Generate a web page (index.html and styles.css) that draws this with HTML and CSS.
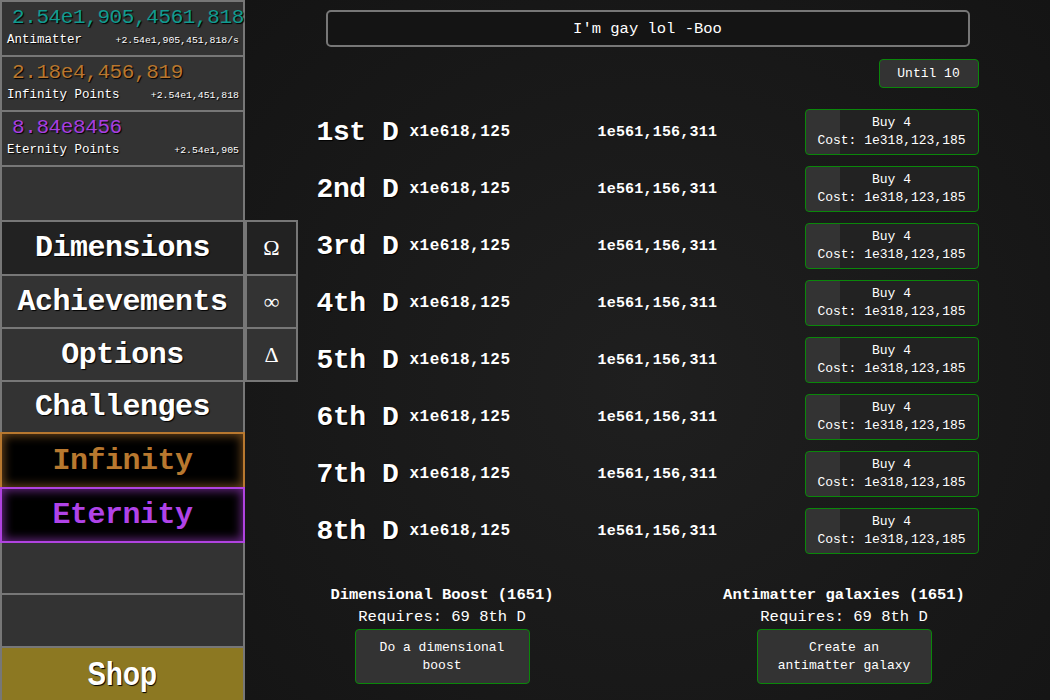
FILE: index.html
```html
<!DOCTYPE html>
<html>
<head>
<meta charset="utf-8">
<link rel="stylesheet" href="styles.css">
</head>
<body>
<div class="app">
  <nav class="sidebar">
    <div class="stat">
      <div class="stat-value am">2.54e1,905,4561,818</div>
      <div class="stat-line"><span class="stat-label">Antimatter</span><span class="stat-rate">+2.54e1,905,451,818/s</span></div>
    </div>
    <div class="stat">
      <div class="stat-value ip">2.18e4,456,819</div>
      <div class="stat-line"><span class="stat-label">Infinity Points</span><span class="stat-rate">+2.54e1,451,818</span></div>
    </div>
    <div class="stat">
      <div class="stat-value ep">8.84e8456</div>
      <div class="stat-line"><span class="stat-label">Eternity Points</span><span class="stat-rate">+2.54e1,905</span></div>
    </div>
    <div class="nav-item empty"></div>
    <div class="nav-item selected">Dimensions</div>
    <div class="nav-item">Achievements</div>
    <div class="nav-item">Options</div>
    <div class="nav-item">Challenges</div>
    <div class="nav-item infinity">Infinity</div>
    <div class="nav-item eternity">Eternity</div>
    <div class="nav-item empty"></div>
    <div class="nav-item empty"></div>
    <div class="nav-item shop"><span class="shop-label">Shop</span></div>
  </nav>
  <div class="subtabs">
    <div class="subtab active">Ω</div>
    <div class="subtab">∞</div>
    <div class="subtab">Δ</div>
  </div>
  <main class="main">
    <div class="content">
      <div class="news">I'm gay lol -Boo</div>
      <div class="until-wrap"><button class="btn until">Until 10</button></div>
      <div class="dims">
        <div class="dim-row"><div class="dim-name">1st D</div><div class="dim-mult">x1e618,125</div><div class="dim-amount">1e561,156,311</div><button class="btn buy">Buy 4<br>Cost: 1e318,123,185</button></div>
        <div class="dim-row"><div class="dim-name">2nd D</div><div class="dim-mult">x1e618,125</div><div class="dim-amount">1e561,156,311</div><button class="btn buy">Buy 4<br>Cost: 1e318,123,185</button></div>
        <div class="dim-row"><div class="dim-name">3rd D</div><div class="dim-mult">x1e618,125</div><div class="dim-amount">1e561,156,311</div><button class="btn buy">Buy 4<br>Cost: 1e318,123,185</button></div>
        <div class="dim-row"><div class="dim-name">4th D</div><div class="dim-mult">x1e618,125</div><div class="dim-amount">1e561,156,311</div><button class="btn buy">Buy 4<br>Cost: 1e318,123,185</button></div>
        <div class="dim-row"><div class="dim-name">5th D</div><div class="dim-mult">x1e618,125</div><div class="dim-amount">1e561,156,311</div><button class="btn buy">Buy 4<br>Cost: 1e318,123,185</button></div>
        <div class="dim-row"><div class="dim-name">6th D</div><div class="dim-mult">x1e618,125</div><div class="dim-amount">1e561,156,311</div><button class="btn buy">Buy 4<br>Cost: 1e318,123,185</button></div>
        <div class="dim-row"><div class="dim-name">7th D</div><div class="dim-mult">x1e618,125</div><div class="dim-amount">1e561,156,311</div><button class="btn buy">Buy 4<br>Cost: 1e318,123,185</button></div>
        <div class="dim-row"><div class="dim-name">8th D</div><div class="dim-mult">x1e618,125</div><div class="dim-amount">1e561,156,311</div><button class="btn buy">Buy 4<br>Cost: 1e318,123,185</button></div>
      </div>
    </div>
    <div class="resets">
      <div class="reset">
        <div class="reset-title">Dimensional Boost (1651)</div>
        <div class="reset-req">Requires: 69 8th D</div>
        <button class="btn reset-btn">Do a dimensional<br>boost</button>
      </div>
      <div class="reset">
        <div class="reset-title">Antimatter galaxies (1651)</div>
        <div class="reset-req">Requires: 69 8th D</div>
        <button class="btn reset-btn">Create an<br>antimatter galaxy</button>
      </div>
    </div>
  </main>
</div>
</body>
</html>
```
FILE: styles.css
```css
* { box-sizing: border-box; }
html, body { margin: 0; padding: 0; }
body {
  width: 1050px;
  height: 700px;
  overflow: hidden;
  background: #161616;
  color: #fff;
  font-family: "Liberation Mono", "DejaVu Sans Mono", monospace;
}
.app {
  position: relative;
  display: flex;
  height: 700px;
}
.sidebar {
  width: 245px;
  flex: none;
  height: 700px;
  background: #777;
  padding: 2px 2px 0 2px;
  display: grid;
  grid-template-columns: minmax(0, 1fr);
  grid-template-rows: 53px 53px 53px 53px 52px 51px 51px 50px 53px 52px 50px 51px 1fr;
  row-gap: 2px;
}
.stat {
  background: #333;
  padding: 4px 4px 0 5px;
  text-shadow: 1px 1px 1px #000;
  min-width: 0;
}
.stat-value {
  font-size: 21px;
  line-height: 24px;
  letter-spacing: -0.4px;
  padding-left: 5px;
  white-space: nowrap;
}
.am { color: #119b90; }
.ip { color: #b9772f; }
.ep { color: #a83fe0; }
.stat-line {
  display: flex;
  justify-content: space-between;
  align-items: baseline;
  margin-top: 3px;
}
.stat-label {
  font-size: 12.5px;
  color: #fff;
}
.stat-rate {
  font-size: 9.8px;
  color: #fff;
}
.nav-item {
  background: #333;
  display: flex;
  align-items: center;
  justify-content: center;
  font-size: 30px;
  font-weight: bold;
  letter-spacing: -0.5px;
  color: #fff;
  text-shadow: 1px 1px 1px #000;
}
.nav-item.selected { background: #222; }
.nav-item.infinity {
  margin: -2px;
  background: #000;
  border: 2px solid #b8782f;
  color: #b8782f;
  box-shadow: inset 0 0 10px 2px rgba(184, 120, 47, 0.55);
  text-shadow: none;
}
.nav-item.eternity {
  margin: -2px;
  background: #000;
  border: 2px solid #b043e0;
  color: #b043e8;
  box-shadow: inset 0 0 10px 2px rgba(176, 67, 224, 0.55);
  text-shadow: none;
}
.nav-item.shop {
  background: #8c7822;
  letter-spacing: 0;
}
.shop-label {
  display: inline-block;
  font-family: "Liberation Sans", Arial, sans-serif;
  font-size: 33px;
  transform: scaleX(0.84);
}
.subtabs {
  position: absolute;
  left: 245px;
  top: 220px;
  width: 53px;
  background: #777;
  padding: 2px;
  display: grid;
  grid-template-rows: 52px 51px 51px;
  row-gap: 2px;
  z-index: 2;
}
.subtab {
  background: #333;
  display: flex;
  align-items: center;
  justify-content: center;
  font-family: "Liberation Serif", "DejaVu Serif", serif;
  font-size: 22px;
  color: #fff;
}
.subtab.active { background: #222; }
.main {
  flex: 1;
  min-width: 0;
  height: 700px;
  background: radial-gradient(ellipse at 50% 55%, #1f1f1f 0%, #1a1a1a 45%, #141414 100%);
  display: flex;
  flex-direction: column;
  align-items: center;
  padding-top: 10px;
}
.content {
  width: 662px;
}
.news {
  margin: 0 9px;
  height: 37px;
  border: 2px solid #777;
  border-radius: 5px;
  background: #141414;
  display: flex;
  align-items: center;
  justify-content: center;
  font-size: 15.5px;
  color: #fff;
}
.until-wrap {
  display: flex;
  justify-content: flex-end;
  margin-top: 12px;
}
.btn {
  font-family: "Liberation Mono", "DejaVu Sans Mono", monospace;
  color: #fff;
  background: #333;
  border: 1px solid #0a870a;
  border-radius: 4px;
  padding: 0;
  cursor: pointer;
}
.until {
  width: 100px;
  height: 29px;
  font-size: 13px;
}
.dims {
  margin-top: 21px;
  display: flex;
  flex-direction: column;
  gap: 11px;
}
.dim-row {
  display: flex;
  align-items: center;
  height: 46px;
}
.dim-name {
  width: 93px;
  font-size: 28px;
  font-weight: bold;
  letter-spacing: -0.4px;
  color: #fff;
  text-shadow: 1px 1px 1px #000;
}
.dim-mult {
  width: 188px;
  font-size: 16px;
  font-weight: bold;
  letter-spacing: 0.5px;
}
.dim-amount {
  flex: 1;
  font-size: 15px;
  font-weight: bold;
  letter-spacing: 0.2px;
}
.buy {
  width: 174px;
  height: 46px;
  font-size: 13px;
  line-height: 18px;
  background: linear-gradient(to right, #333 0, #333 20%, #222 20%, #222 100%);
}
.resets {
  margin-top: 30px;
  width: 804px;
  margin-left: -9px;
  display: grid;
  grid-template-columns: 402px 402px;
}
.reset {
  display: flex;
  flex-direction: column;
  align-items: center;
}
.reset-title {
  font-size: 15.5px;
  font-weight: bold;
  line-height: 22px;
}
.reset-req {
  font-size: 15.5px;
  line-height: 22px;
}
.reset-btn {
  margin-top: 1px;
  width: 175px;
  height: 55px;
  font-size: 13px;
  line-height: 18px;
}
```
